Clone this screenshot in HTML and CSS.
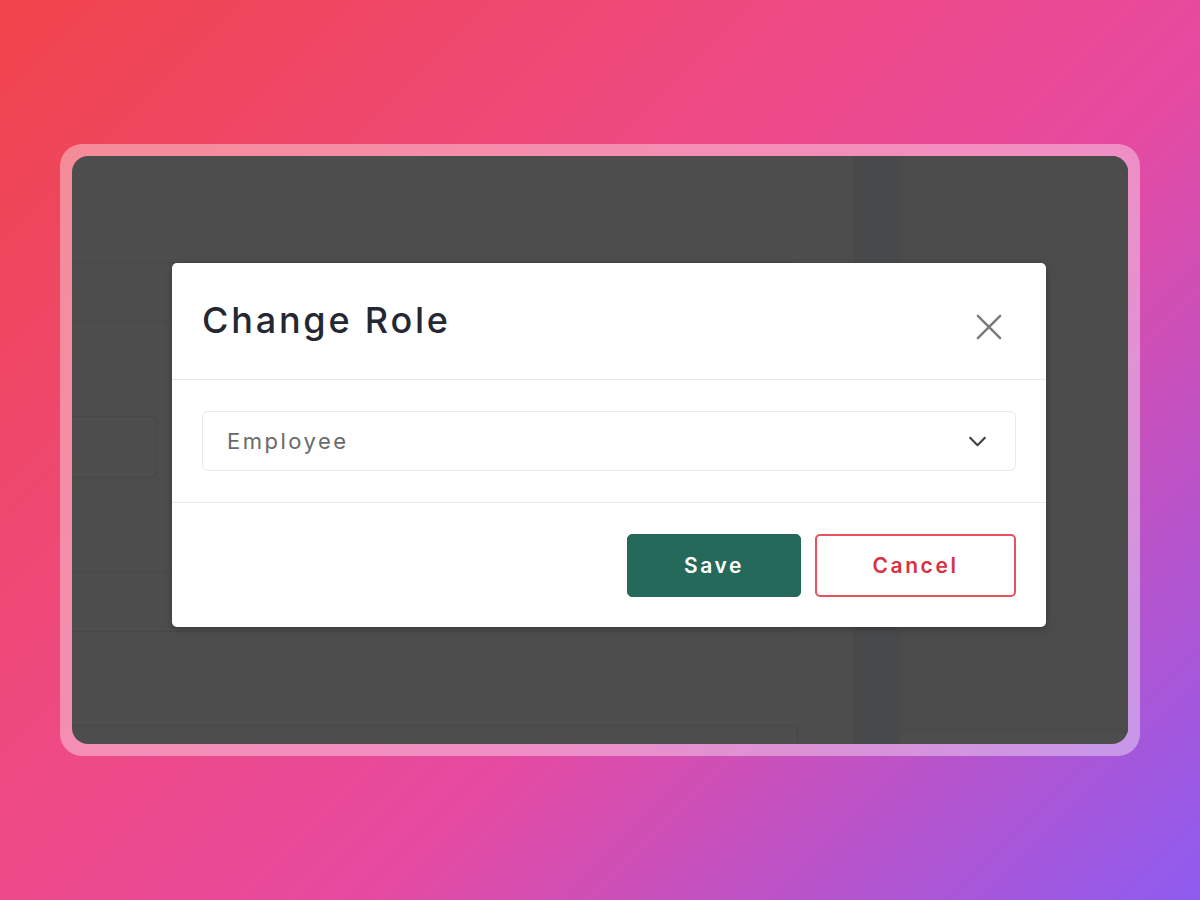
FILE: index.html
```html
<!DOCTYPE html>
<html lang="en">
<head>
<meta charset="utf-8">
<title>Change Role</title>
<link rel="stylesheet" href="styles.css">
</head>
<body>
<div class="frame">
  <div class="screen">
    <div class="app">
      <div class="main">
        <div class="row row-first"></div>
        <div class="field-ghost"></div>
        <div class="row row-second"></div>
        <div class="card-ghost"></div>
      </div>
      <div class="strip"></div>
      <div class="side"></div>
    </div>
    <div class="modal" role="dialog" aria-labelledby="modal-title">
      <div class="modal-header">
        <h2 id="modal-title" class="modal-title">Change Role</h2>
        <button class="close-btn" aria-label="Close">
          <svg width="28" height="28" viewBox="0 0 28 28" fill="none" stroke="#7a7a7a" stroke-width="2.6" stroke-linecap="round"><path d="M2 2L26 26M26 2L2 26"/></svg>
        </button>
      </div>
      <div class="modal-body">
        <div class="select">
          <span class="select-value">Employee</span>
          <svg class="chevron" width="20" height="12" viewBox="0 0 20 12" fill="none" stroke="#444" stroke-width="2.4" stroke-linecap="round" stroke-linejoin="round"><path d="M2 2L10 10L18 2"/></svg>
        </div>
      </div>
      <div class="modal-footer">
        <button class="btn btn-save">Save</button>
        <button class="btn btn-cancel">Cancel</button>
      </div>
    </div>
  </div>
</div>
</body>
</html>
```
FILE: styles.css
```css
html, body {
  margin: 0;
  padding: 0;
}
body {
  width: 1200px;
  height: 900px;
  background: linear-gradient(135deg, #f0444a 0%, #ee4a86 40%, #e64aa0 60%, #8e5cf0 100%);
  display: flex;
  align-items: center;
  justify-content: center;
  font-family: "Inter", "Liberation Sans", sans-serif;
}
.frame {
  width: 1056px;
  height: 588px;
  padding: 12px;
  border-radius: 22px;
  background: rgba(255, 255, 255, 0.38);
}
.screen {
  position: relative;
  width: 1056px;
  height: 588px;
  border-radius: 16px;
  background: #4d4d4d;
  overflow: hidden;
}
.app {
  display: flex;
  height: 100%;
}
.main {
  width: 726px;
  padding-top: 106px;
  display: flex;
  flex-direction: column;
}
.main > div {
  flex-shrink: 0;
}
.row {
  height: 58px;
  border-top: 1px solid #474747;
  border-bottom: 1px solid #474747;
  border-right: 1px solid #474747;
  border-radius: 0 6px 6px 0;
}
.field-ghost {
  margin-top: 94px;
  width: 84px;
  height: 60px;
  border: 1px solid #474747;
  border-left: none;
  border-radius: 0 6px 6px 0;
}
.row-second {
  margin-top: 94px;
}
.card-ghost {
  margin-top: 93px;
  height: 40px;
  border-top: 1px solid #474747;
  border-right: 1px solid #474747;
  border-radius: 0 6px 0 0;
}
.strip {
  margin-left: 55px;
  width: 47px;
  background: #48494a;
}
.side {
  width: 228px;
  height: 578px;
  background: #4b4b4b;
}
.modal {
  position: absolute;
  left: 100px;
  top: 107px;
  width: 874px;
  background: #ffffff;
  border-radius: 5px;
  box-shadow: 0 2px 6px rgba(0, 0, 0, 0.25);
  display: flex;
  flex-direction: column;
}
.modal-header {
  height: 116px;
  border-bottom: 1px solid #e4e7eb;
  display: flex;
  align-items: center;
  justify-content: space-between;
  padding: 0 30px;
}
.modal-title {
  margin: 0;
  font-size: 36px;
  font-weight: 500;
  color: #252833;
  letter-spacing: 2.8px;
  padding-bottom: 2px;
}
.close-btn {
  background: none;
  border: none;
  padding: 0;
  margin-right: 13px;
  margin-top: 12px;
  width: 28px;
  height: 28px;
  display: flex;
}
.close-btn svg {
  width: 26px;
  height: 26px;
  margin: 1px;
}
.modal-body {
  padding: 31px 30px 31px;
  border-bottom: 1px solid #e4e7eb;
}
.select {
  height: 58px;
  border: 1px solid #e6ebed;
  border-radius: 6px;
  display: flex;
  align-items: center;
  justify-content: space-between;
  padding: 0 28px 0 24px;
}
.select-value {
  font-size: 22px;
  color: #6a6a6a;
  letter-spacing: 2.5px;
  font-weight: 400;
}
.chevron {
  width: 19px;
  height: 11px;
}
.modal-footer {
  height: 124px;
  padding: 0 30px;
  display: flex;
  align-items: center;
  justify-content: flex-end;
  gap: 14px;
}
.btn {
  height: 63px;
  border-radius: 5px;
  font-family: "Inter", "Liberation Sans", sans-serif;
  font-size: 21px;
  font-weight: 600;
  letter-spacing: 2.6px;
  cursor: pointer;
}
.btn-save {
  width: 174px;
  background: #25695b;
  border: 1px solid #25695b;
  color: #ffffff;
}
.btn-cancel {
  width: 201px;
  background: #ffffff;
  border: 2px solid #e5535e;
  color: #d8323f;
}
```
